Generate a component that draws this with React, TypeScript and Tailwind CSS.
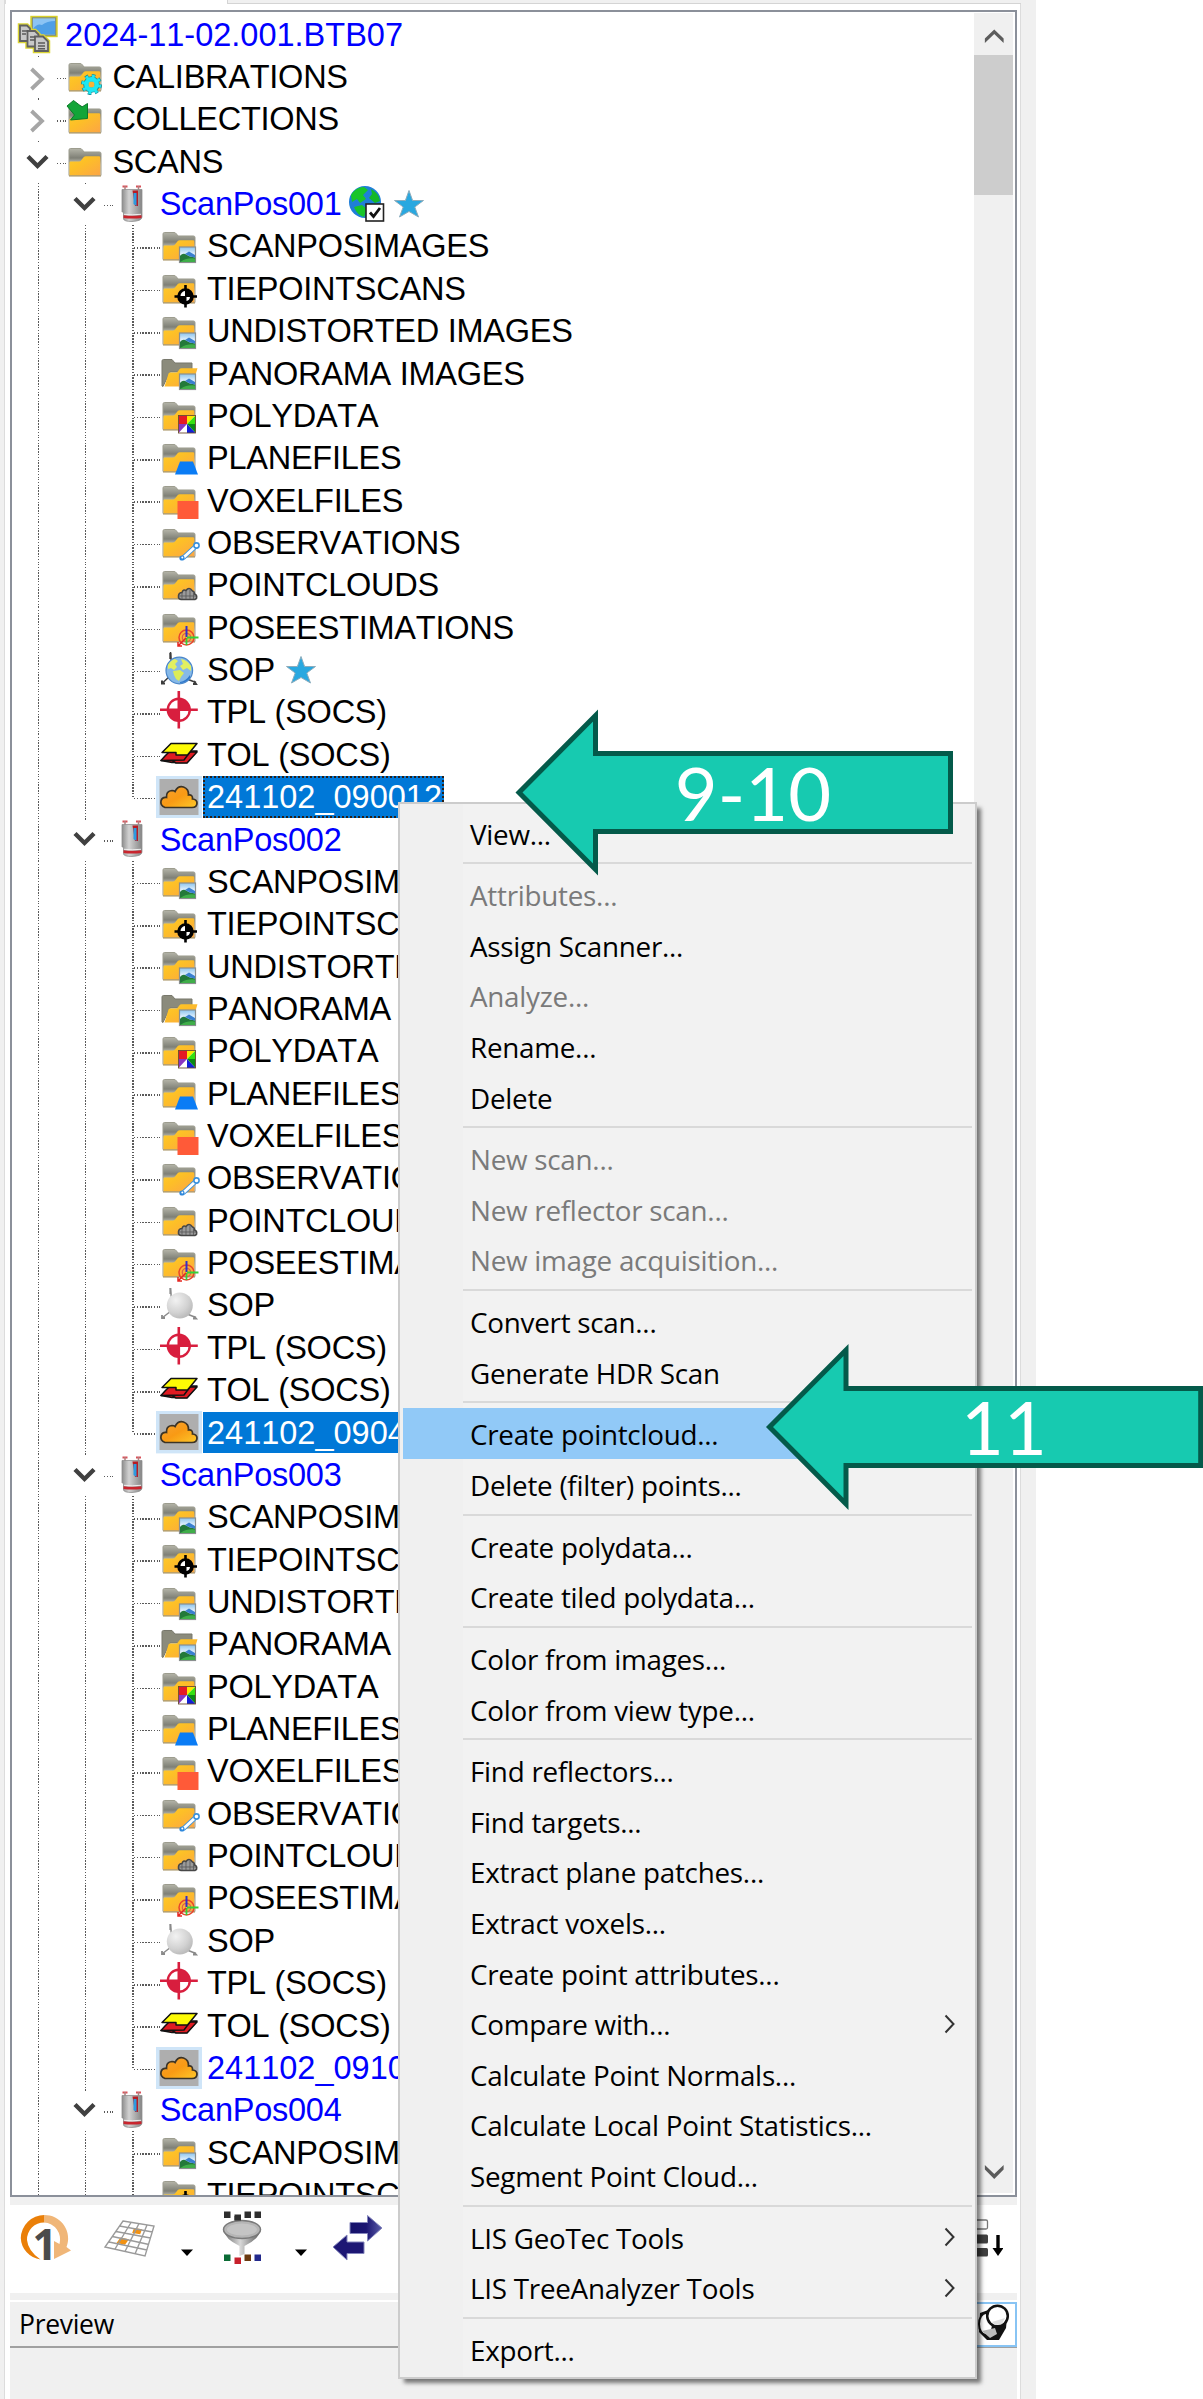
import type { ReactNode } from "react";

type IconName =
  | "images" | "tie" | "undist" | "pano" | "poly" | "plane" | "voxel" | "obs"
  | "pcloud" | "pose" | "globe" | "sphere" | "tpl" | "tol" | "cloud"
  | "project" | "calib" | "collect" | "folder" | "scanner";

function Defs() {
  return (
    <svg className="absolute h-0 w-0" aria-hidden="true">
      <defs>
        <linearGradient id="gFront" x1="0" y1="0" x2="1" y2="1">
          <stop offset="0" stopColor="#ffcb28" />
          <stop offset="0.4" stopColor="#fdbf27" />
          <stop offset="1" stopColor="#fca545" />
        </linearGradient>
        <linearGradient id="gBack" x1="0" y1="0" x2="0" y2="1">
          <stop offset="0" stopColor="#b4b4a8" />
          <stop offset="0.35" stopColor="#7f8076" />
          <stop offset="0.6" stopColor="#d4d4ca" />
        </linearGradient>
        <linearGradient id="gCloud" x1="0" y1="0" x2="1" y2="1">
          <stop offset="0" stopColor="#f7a233" />
          <stop offset="0.5" stopColor="#f99a14" />
          <stop offset="1" stopColor="#fdc92a" />
        </linearGradient>
        <linearGradient id="gSky" x1="0" y1="0" x2="0" y2="1">
          <stop offset="0" stopColor="#8cc4ee" />
          <stop offset="0.5" stopColor="#eef7ff" />
          <stop offset="1" stopColor="#3d8fd0" />
        </linearGradient>
        <linearGradient id="gScan" x1="0" y1="0" x2="1" y2="0">
          <stop offset="0" stopColor="#8d8d8d" />
          <stop offset="0.35" stopColor="#d2d2d2" />
          <stop offset="1" stopColor="#858585" />
        </linearGradient>
        <radialGradient id="gSphere" cx="0.35" cy="0.3" r="0.8">
          <stop offset="0" stopColor="#f2f2f2" />
          <stop offset="0.6" stopColor="#d2d2d2" />
          <stop offset="1" stopColor="#b4b4b4" />
        </radialGradient>
        <linearGradient id="gFunnel" x1="0" y1="0" x2="1" y2="0">
          <stop offset="0" stopColor="#6a6a6a" />
          <stop offset="0.45" stopColor="#d8d8d8" />
          <stop offset="1" stopColor="#5c5c5c" />
        </linearGradient>
        <linearGradient id="gArrowBlue" x1="0" y1="0" x2="1" y2="0">
          <stop offset="0" stopColor="#15126a" />
          <stop offset="0.5" stopColor="#1b1572" />
          <stop offset="1" stopColor="#5a5ca8" />
        </linearGradient>
      </defs>
    </svg>
  );
}

function Folder() {
  return (
    <g>
      <path d="M7 34.500V9q0-1.500 1.500-1.500H18q1.500 0 2.500 1.500l1.500 2H37.500q1.500 0 1.500 1.500V34.500Z" fill="url(#gBack)" stroke="#9c9c8e" strokeWidth="1" />
      <path d="M7.500 34.500V21.500q0-1 1.200-1H17q1.200 0 2-1l2.800-3.500q.7-.8 2-.8H37q1.300 0 1.300 1.300V34.500Z" fill="url(#gFront)" />
      <path d="M7 35H39" stroke="#b09c70" strokeWidth="1.200" />
    </g>
  );
}

function Photo() {
  return (
    <g>
      <rect x="23.500" y="22" width="16" height="15.500" fill="url(#gSky)" stroke="#8a8f8f" strokeWidth="1.200" />
      <path d="M24 31q3-4 7-1l3 1.500 5.200 1V37H24Z" fill="#23793a" />
      <path d="M29 29l4-2.500 6 3.500v2.500l-5-1Z" fill="#3a7fd0" />
      <path d="M25 36.500q6-4 14-3V37H24Z" fill="#3fae49" />
    </g>
  );
}

const GLYPHS: Record<IconName, ReactNode> = {
  folder: <Folder />,
  images: <g><Folder /><Photo /></g>,
  undist: <g><Folder /><g transform="translate(0 1)"><Photo /></g></g>,
  pano: (
    <g>
      <path d="M6 34V9q0-1.500 1.500-1.500H16l3 3.500H36V20H14L7 34.500Z" fill="#8b8b7c" stroke="#77776b" />
      <path d="M8.500 34.500L12.500 21.500q.5-1 1.500-1H20q1.200 0 2-1.200l1.500-2q.6-1 2-1H41.500L36 34.500Z" fill="url(#gFront)" />
      <Photo />
    </g>
  ),
  tie: (
    <g>
      <Folder />
      <path d="M29.500 17V39.500M18.500 28.500H41" stroke="#000" strokeWidth="2.600" />
      <circle cx="29.500" cy="28.500" r="8.300" fill="#000" />
      <path d="M29 28V23A5.500 5.500 0 0 0 24.500 28ZM30.500 29V33A4.500 4.500 0 0 0 34 29Z" fill="#fff" />
    </g>
  ),
  poly: (
    <g>
      <Folder />
      <rect x="22.500" y="20.500" width="17" height="17.500" fill="#fff" />
      <path d="M22.500 20.500H31V29H22.500Z" fill="#e51a24" />
      <path d="M31 29V20.500H39.500Z" fill="#ffe600" />
      <path d="M31 29L39.500 20.500V29Z" fill="#35e010" />
      <path d="M31 29H39.500V38Z" fill="#0b8a14" />
      <path d="M31 29L39.500 38H31Z" fill="#1420d8" />
      <path d="M31 29L22.500 38V29Z" fill="#8a35c0" />
      <rect x="22.500" y="20.500" width="17" height="17.500" fill="none" stroke="#6a4a30" strokeWidth="0.900" />
    </g>
  ),
  plane: <g><Folder /><path d="M24 24.500H37L42 37.500H19Z" fill="#0a7cf5" /></g>,
  voxel: <g><Folder /><rect x="21.500" y="22" width="21" height="18" fill="#ff5a38" /></g>,
  obs: (
    <g>
      <Folder />
      <path d="M27 36L40 24" stroke="#3b92dd" strokeWidth="4.600" />
      <path d="M27 36L40 24" stroke="#fff" strokeWidth="3" />
      <circle cx="40.500" cy="23.500" r="2.600" fill="#fff" stroke="#3b92dd" strokeWidth="1.600" />
      <circle cx="26" cy="36" r="2.600" fill="#2f88dc" />
      <circle cx="26.300" cy="35.400" r="1" fill="#fff" />
    </g>
  ),
  pcloud: (
    <g>
      <Folder />
      <path d="M25 35.500Q22 35 22.500 31.500Q23 28.500 26 28.500Q27 25 30 26.500Q33 22.500 36.500 27Q38.500 27.500 38.500 30Q41.500 31 40.500 34.500L39 35.500Z" fill="#9a9a9a" stroke="#474747" strokeWidth="1.500" />
      <path d="M26 29V35M30 27V35M34 26V35M37.500 29V35M23 32H40" stroke="#5c5c5c" strokeWidth="0.900" />
    </g>
  ),
  pose: (
    <g>
      <Folder />
      <circle cx="30.500" cy="30.500" r="7.500" fill="none" stroke="#e8452c" strokeWidth="1.500" />
      <circle cx="30.500" cy="30.500" r="4.200" fill="none" stroke="#d9604a" strokeWidth="1.200" />
      <path d="M30.500 19V30" stroke="#3030c8" strokeWidth="2" />
      <path d="M31 30.500H42.500M30.500 31V38" stroke="#35d038" strokeWidth="1.800" />
      <path d="M30 31L22 39M22 35V39H26" stroke="#e52520" strokeWidth="1.500" fill="none" />
    </g>
  ),
  globe: (
    <g>
      <path d="M14.500 3L15.500 16M6 34.500L15 26M31 30L40 33.500" stroke="#3c3c3c" strokeWidth="1.500" fill="none" />
      <path d="M14.300 4v6M6 31.500v3h3M37 35h3l-2-3" stroke="#3c3c3c" strokeWidth="2" fill="none" />
      <circle cx="23.300" cy="21.500" r="13.300" fill="#86b9e8" stroke="#4a86c8" strokeWidth="1.200" />
      <path d="M12 16Q15 11 19 10L22 12L19 15L21 18L18 21L15 19L12 20Z" fill="#e2f060" />
      <path d="M25 10Q31 11 35 17L35 22L31 19L27 21L24 17L27 15Z" fill="#e2f060" />
      <path d="M17 22L24 21L28 24L25 28L23 32L20 30L18 26Z" fill="#dcec58" />
      <path d="M24 33Q30 32 34 26L34 29Q30 34 24 34Z" fill="#2f78cc" />
    </g>
  ),
  sphere: (
    <g>
      <path d="M14.500 4L15.500 16M6 34L15 27M31 30L40 33.500" stroke="#8a8a8a" strokeWidth="1.500" fill="none" />
      <path d="M14.300 4v6M6 31v3h3M37 34.500h3l-2-2" stroke="#8a8a8a" strokeWidth="1.800" fill="none" />
      <circle cx="23.800" cy="21.500" r="13" fill="url(#gSphere)" />
    </g>
  ),
  tpl: (
    <g>
      <circle cx="22.800" cy="18.800" r="11" fill="#fff" stroke="#d81e3e" strokeWidth="2.400" />
      <path d="M22.800 18.800V8A11 11 0 0 1 34 18.800ZM22.800 18.800V30A11 11 0 0 1 12 18.800Z" fill="#d81e3e" />
      <path d="M22.800 0V37.500M4 18.800H41.800" stroke="#d81e3e" strokeWidth="2.600" />
    </g>
  ),
  tol: (
    <g stroke="#111" strokeWidth="1.500" strokeLinejoin="round">
      <path d="M5 26.500L9 22L14 17H41L31 28.500H16Z" fill="#e01b22" />
      <path d="M5 26.500H16L20 29H31L41 18H34L28 26Z" fill="#e01b22" />
      <path d="M15 9.500H41L31.500 21H20V18.500H6Z" fill="#fdfb05" />
    </g>
  ),
  cloud: (
    <g>
      <rect x="0" y="0" width="46" height="42.400" fill="#cfe5f8" />
      <rect x="3.500" y="3" width="39" height="36" fill="#aeaeae" />
      <path d="M9 31.500Q4 29.500 5 25Q6 21 10.500 21.500Q10 15 16 14.500Q18 14.500 19 15.500Q22 9.500 27.500 11Q33 13 32.500 19Q37 18.500 36.500 23Q41 23.500 41 27Q41 31.500 36 31.500Z" fill="url(#gCloud)" stroke="#3c3426" strokeWidth="1.700" />
    </g>
  ),
  project: (
    <g>
      <rect x="16.500" y="3" width="25" height="19" fill="#8cc4f4" stroke="#d8d02a" strokeWidth="2.400" />
      <path d="M18 15Q22 9 27 11Q32 7 40 7V20.500H18Z" fill="#4f9fe6" />
      <rect x="17.300" y="3.800" width="23.400" height="17.400" fill="none" stroke="#6f7f90" strokeWidth="0.900" />
      <g fill="#b9b9b9" stroke="#dbd536" strokeWidth="4.500">
        <path d="M5 11.500H12L15 14.500V27H5Z" />
        <path d="M12.500 17H20L23.500 20.500V32.500H12.500Z" />
        <path d="M20 22.500H28L33 27.500V37H20Z" />
      </g>
      <g fill="#c8c8c8" stroke="#616161" strokeWidth="1.800">
        <path d="M5 11.500H12L15 14.500V27H5Z" />
        <path d="M12.500 17H20L23.500 20.500V32.500H12.500Z" />
        <path d="M20 22.500H28L33 27.500V37H20Z" />
      </g>
      <path d="M7 17h6M7 20h4M15 23h5M15 26h5M23 29h7M23 32h7M23 34.700h7" stroke="#5a5a5a" strokeWidth="1.500" />
    </g>
  ),
  calib: (
    <g>
      <Folder />
      <circle cx="29.500" cy="28.500" r="8.300" fill="none" stroke="#1b8e98" strokeWidth="4.500" strokeDasharray="3.300 3.220" />
      <circle cx="29.500" cy="28.500" r="5.800" fill="none" stroke="#1b8e98" strokeWidth="5" />
      <circle cx="29.500" cy="28.500" r="8" fill="none" stroke="#1fe8f2" strokeWidth="3.500" strokeDasharray="2.600 3.680" strokeDashoffset="-.3" />
      <circle cx="29.500" cy="28.500" r="5.200" fill="none" stroke="#1fe8f2" strokeWidth="4.400" />
    </g>
  ),
  collect: (
    <g>
      <Folder />
      <path d="M5 8L11.500 2.500L20 9L25.500 5.500V20.500L8.500 22L12.500 17Z" fill="#12a538" stroke="#0b7a28" strokeWidth="1" />
    </g>
  ),
  scanner: (
    <g>
      <path d="M13.500 3.500h5M27 3.500h5" stroke="#d85058" strokeWidth="2" />
      <path d="M16 3v4M29.500 3v4" stroke="#b08080" strokeWidth="1.500" />
      <path d="M13 6.500H33V34Q33 38 23 38.500Q15 38.500 14.500 36L14.500 29H13Z" fill="url(#gScan)" stroke="#909090" strokeWidth="0.800" />
      <path d="M23.500 7.500H29V23H26Z" fill="#b81c24" />
      <path d="M24.500 10H27.500V23L24.500 21Z" fill="#2c9be0" />
      <path d="M14.500 32.300Q23 33.300 32.500 32.300V35Q23 36 14.500 35Z" fill="#c9252e" />
      <path d="M15 31.300Q23 32.300 32 31.300" stroke="#eee" strokeWidth="1" fill="none" />
    </g>
  ),
};

function Icon({ name }: { name: IconName }) {
  return (
    <svg className="relative h-[42.37px] w-[47px] shrink-0" viewBox="0 0 47 42.37">
      {GLYPHS[name]}
    </svg>
  );
}

const V_DOTS = "bg-[repeating-linear-gradient(180deg,#5a5a5a_0px,#5a5a5a_1.4px,#fff_1.4px,#fff_2.83px)]";
const H_DOTS = "bg-[repeating-linear-gradient(90deg,#5a5a5a_0px,#5a5a5a_1.4px,#fff_1.4px,#fff_2.83px)]";

type GuideKind = "line" | "tee" | "end" | "open" | "closed";

function Guide({ kind }: { kind: GuideKind }) {
  const chevron = kind === "open" || kind === "closed";
  return (
    <span className="relative h-full w-[47.3px] shrink-0">
      {(kind === "line" || kind === "tee") && <span className={`absolute inset-y-0 left-[23px] w-[1.500px] ${V_DOTS}`} />}
      {kind === "end" && <span className={`absolute top-0 left-[23px] h-[23px] w-[1.500px] ${V_DOTS}`} />}
      {(kind === "tee" || kind === "end") && <span className={`absolute top-[22px] left-[25px] h-[1.500px] w-[26px] ${H_DOTS}`} />}
      {chevron && <span className="absolute top-0 left-[23px] h-[1.500px] w-[1.500px] bg-[#555]" />}
      {chevron && <span className={`absolute top-[22px] left-[42px] h-[1.500px] w-[9px] ${H_DOTS}`} />}
      {kind === "open" && (
        <svg className="absolute top-[13px] left-[11px] h-[16px] w-[24px]" viewBox="0 0 24 16">
          <path d="M2 2.500L11.500 12L21 2.500" fill="none" stroke="#404040" strokeWidth="4.400" />
        </svg>
      )}
      {kind === "closed" && (
        <svg className="absolute top-[11px] left-[14px] h-[24px] w-[17px]" viewBox="0 0 17 24">
          <path d="M2.500 2L13 12L2.500 22" fill="none" stroke="#a6a6a6" strokeWidth="3.800" />
        </svg>
      )}
    </span>
  );
}

function Star() {
  return (
    <svg className="h-[30px] w-[32px]" viewBox="0 0 32 30">
      <path d="M16 1.500L19.600 11.500H30.500L21.800 18L25.500 28L16 22.500L6.500 28L10.200 18L1.500 11.500H12.400Z" fill="#29a8e0" stroke="#8cacbc" strokeWidth="1" />
    </svg>
  );
}

function CheckedGlobe() {
  return (
    <svg className="h-[38px] w-[37px]" viewBox="0 0 37 38">
      <circle cx="17" cy="17" r="16" fill="#1f7fd8" />
      <path d="M3 10Q8 2 16 2L20 5L15 10L18 14L12 18L9 14L4 17Z" fill="#18c52a" />
      <path d="M23 4Q31 8 32 16L27 18L21 13L24 9Z" fill="#14b828" />
      <path d="M6 22L14 20L19 24L16 32Q9 30 6 22Z" fill="#18c52a" />
      <rect x="18" y="19" width="17.500" height="17" fill="#fff" stroke="#222" strokeWidth="1.600" />
      <path d="M22 27.500L25.500 31.500L32 23" fill="none" stroke="#111" strokeWidth="2.800" />
    </svg>
  );
}

type Row = {
  guides: GuideKind[];
  icon: IconName;
  label: string;
  blue?: boolean;
  selected?: "focus" | "plain";
  extra?: ReactNode;
};

function TreeRow({ guides, icon, label, blue, selected, extra }: Row) {
  const tone = selected ? "bg-[#0078d7] text-white" : blue ? "text-[#0000ff]" : "text-black";
  const outline = selected === "focus" ? "outline-2 -outline-offset-2 outline-dotted outline-[#2b2018]" : "";
  const tracking = /^\d/.test(label) ? "tracking-[0px]" : "tracking-[-0.250px]";
  return (
    <div className="flex h-[42.37px] shrink-0 items-center whitespace-nowrap">
      {guides.map((g, i) => <Guide key={i} kind={g} />)}
      <Icon name={icon} />
      <span className={`flex h-[41.500px] items-center pr-[2px] pl-[3.500px] text-[32.500px] leading-[40px] [font-kerning:none] ${tracking} ${tone} ${outline}`}>
        {label}
      </span>
      {extra}
    </div>
  );
}

const CHILDREN: [IconName, string][] = [
  ["images", "SCANPOSIMAGES"],
  ["tie", "TIEPOINTSCANS"],
  ["undist", "UNDISTORTED IMAGES"],
  ["pano", "PANORAMA IMAGES"],
  ["poly", "POLYDATA"],
  ["plane", "PLANEFILES"],
  ["voxel", "VOXELFILES"],
  ["obs", "OBSERVATIONS"],
  ["pcloud", "POINTCLOUDS"],
  ["pose", "POSEESTIMATIONS"],
  ["sphere", "SOP"],
  ["tpl", "TPL (SOCS)"],
  ["tol", "TOL (SOCS)"],
];

function scanRows(id: string, scan: string | null, selected?: "focus" | "plain", count = 13): Row[] {
  const first = id === "ScanPos001";
  const rows: Row[] = [
    {
      guides: ["line", "open"],
      icon: "scanner",
      label: id,
      blue: true,
      extra: first ? <span className="ml-[4px] flex items-center gap-[8px]"><CheckedGlobe /><Star /></span> : null,
    },
  ];
  CHILDREN.slice(0, count).forEach(([icon, label]) => {
    const located = first && label === "SOP";
    rows.push({
      guides: ["line", "line", "tee"],
      icon: located ? "globe" : icon,
      label,
      extra: located ? <span className="ml-[8px]"><Star /></span> : null,
    });
  });
  if (scan) rows.push({ guides: ["line", "line", "end"], icon: "cloud", label: scan, blue: true, selected });
  return rows;
}

const ROWS: Row[] = [
  { guides: [], icon: "project", label: "2024-11-02.001.BTB07", blue: true },
  { guides: ["closed"], icon: "calib", label: "CALIBRATIONS" },
  { guides: ["closed"], icon: "collect", label: "COLLECTIONS" },
  { guides: ["open"], icon: "folder", label: "SCANS" },
  ...scanRows("ScanPos001", "241102_090012", "focus"),
  ...scanRows("ScanPos002", "241102_090412", "plain"),
  ...scanRows("ScanPos003", "241102_091012"),
  ...scanRows("ScanPos004", null, undefined, 2),
];

function ScrollBar() {
  return (
    <div className="mt-[1px] mr-[2px] mb-[2px] flex w-[39.500px] shrink-0 flex-col items-center bg-[#f0f0f0]">
      <svg className="h-[42px] w-full" viewBox="0 0 40 42">
        <path d="M11 25.500L20.500 16.500L30 25.500V30L20.500 21L11 30Z" fill="#5c5c5c" />
      </svg>
      <div className="h-[140px] w-full bg-[#cdcdcd]" />
      <div className="flex-1" />
      <svg className="h-[42px] w-full" viewBox="0 0 40 42">
        <path d="M11 14V18.500L20.500 28L30 18.500V14L20.500 23Z" fill="#5c5c5c" />
      </svg>
    </div>
  );
}

function DropArrow() {
  return (
    <svg className="h-[7px] w-[12px]" viewBox="0 0 12 7"><path d="M0 .5H12L6 7Z" fill="#000" /></svg>
  );
}

function Toolbar() {
  return (
    <div className="mt-[8px] flex h-[88px] shrink-0 items-start bg-white">
      <svg className="mt-[8px] ml-[10px] h-[50px] w-[54px] overflow-visible" viewBox="0 0 54 50">
        <path d="M20.500 46.500A22.500 22.500 0 0 1 .8 25A23.500 23.500 0 0 1 24.300 2V9.500A17 17 0 0 0 7 27Q8 38 20.500 46.500Z" fill="#ea7f08" />
        <path d="M24 2A23.500 23.500 0 0 1 46.500 34L51 37.500L34 46V28L39.500 31A17 17 0 0 0 24 9.500Z" fill="#f0b678" />
        <text x="12.500" y="46.500" fontFamily="Open Sans" fontWeight="700" fontSize="43" fill="#4b4b4b">1</text>
      </svg>
      <svg className="mt-[14px] ml-[29px] h-[40px] w-[53px]" viewBox="0 0 53 40">
        <path d="M20 2L51 7L42 37L2 28Z" fill="#fff" />
        <path d="M31 9l8 1.300-1.800 5-8-1.300ZM17.500 18.500l8.500 1.700-4 5.500-8.500-1.800Z" fill="#f39211" />
        <path d="M20 2L51 7L42 37L2 28ZM28 3.500L12 30M36 4.500L22 32.500M44 6L32 35M16.500 7L49.500 13M13 12.500L47.500 19M9.500 17.500L46 25.500M6 23L44 31" fill="none" stroke="#9a9a9a" strokeWidth="1.400" />
      </svg>
      <span className="mt-[44px] ml-[25px] flex"><DropArrow /></span>
      <svg className="mt-[5px] ml-[28.500px] h-[55px] w-[42px]" viewBox="0 0 42 55">
        <g fill="#2e2e2e"><rect x="2" y="1.500" width="6.500" height="6.500" /><rect x="12.500" y="4.500" width="6.500" height="6" /><rect x="22.500" y="1.500" width="6.500" height="6.500" /><rect x="32.500" y="1.500" width="6.500" height="6.500" /></g>
        <path d="M1.500 20Q3 29 17.500 36V46L22.500 44V36Q37 29 38.500 20Z" fill="url(#gFunnel)" />
        <ellipse cx="20" cy="19.500" rx="18.500" ry="9" fill="#b5b5b5" stroke="#7a7a7a" strokeWidth="1.500" />
        <ellipse cx="20" cy="19.500" rx="15" ry="6" fill="#c4c4c4" />
        <rect x="12.500" y="6" width="6.500" height="4.500" fill="#2e2e2e" />
        <rect x="2" y="44.500" width="6.500" height="6.500" fill="#0b6b35" /><rect x="12.500" y="47.500" width="6.500" height="6.500" fill="#c8202c" />
        <rect x="22.500" y="44.500" width="6.500" height="6.500" fill="#6b3a10" /><rect x="32.500" y="44.500" width="6.500" height="6.500" fill="#23298c" />
      </svg>
      <span className="mt-[44px] ml-[31px] flex"><DropArrow /></span>
      <svg className="mt-[9px] ml-[25px] h-[47px] w-[51px]" viewBox="0 0 51 47">
        <path d="M18 8.500H35.500V1.500L50 14L35.500 27V19.500H18Z" fill="url(#gArrowBlue)" stroke="#8486bc" strokeWidth="1" />
        <path d="M32 28V39.500H15V46L1 33L15 21V28Z" fill="#1d1774" stroke="#8486bc" strokeWidth="1" />
      </svg>
      <svg className="mt-[14px] mr-[14px] ml-auto h-[38px] w-[40px]" viewBox="0 0 40 38">
        <rect x="0" y="1" width="24.500" height="9" rx="1.500" fill="#fff" stroke="#777" strokeWidth="1.300" />
        <rect x="0" y="15.500" width="25" height="9" rx="1.500" fill="#404040" /><rect x="0" y="29" width="25" height="8.500" rx="1.500" fill="#404040" />
        <path d="M35 16V31" stroke="#000" strokeWidth="3.400" /><path d="M29.500 29H40.500L35 37Z" fill="#000" />
      </svg>
    </div>
  );
}

function PreviewBar() {
  return (
    <div className="mt-[7px] flex h-[48px] shrink-0 items-start justify-between border-t-2 border-b-2 border-t-white border-b-[#a0a0a0] bg-[#f0f0f0] pl-[9px]">
      <span className="font-['Open_Sans'] text-[26.500px] leading-[44px] tracking-[-0.300px] text-black">Preview</span>
      <div className="flex h-[45px] w-[58px] justify-end border-2 border-[#88c4f4] bg-white pr-[4px]">
        <svg className="h-[40px] w-[36px]" viewBox="0 0 36 40">
          <path d="M5 9L16 5L32 14L31 24L24 36H12L4 28Z" fill="#111" />
          <ellipse cx="11" cy="20" rx="7" ry="11" fill="#fff" stroke="#111" strokeWidth="2" />
          <path d="M7 27L20 24L22 30L15 34Z" fill="#bbb" />
          <circle cx="22.500" cy="12" r="10.300" fill="#fff" stroke="#111" strokeWidth="2.500" />
          <path d="M17 18L30 14L27 20L20 21Z" fill="#ddd" />
        </svg>
      </div>
    </div>
  );
}

type Item = { label: string; off?: boolean; sub?: boolean; hot?: boolean };

const MENU: Item[][] = [
  [{ label: "View..." }],
  [
    { label: "Attributes...", off: true },
    { label: "Assign Scanner..." },
    { label: "Analyze...", off: true },
    { label: "Rename..." },
    { label: "Delete" },
  ],
  [
    { label: "New scan...", off: true },
    { label: "New reflector scan...", off: true },
    { label: "New image acquisition...", off: true },
  ],
  [{ label: "Convert scan..." }, { label: "Generate HDR Scan" }],
  [{ label: "Create pointcloud...", hot: true }, { label: "Delete (filter) points..." }],
  [{ label: "Create polydata..." }, { label: "Create tiled polydata..." }],
  [{ label: "Color from images..." }, { label: "Color from view type..." }],
  [
    { label: "Find reflectors..." },
    { label: "Find targets..." },
    { label: "Extract plane patches..." },
    { label: "Extract voxels..." },
    { label: "Create point attributes..." },
    { label: "Compare with...", sub: true },
    { label: "Calculate Point Normals..." },
    { label: "Calculate Local Point Statistics..." },
    { label: "Segment Point Cloud..." },
  ],
  [{ label: "LIS GeoTec Tools", sub: true }, { label: "LIS TreeAnalyzer Tools", sub: true }],
  [{ label: "Export..." }],
];

function ContextMenu() {
  return (
    <div className="absolute top-[802px] left-[398px] flex h-[1577px] w-[579px] flex-col border-2 border-[#cccccc] bg-[linear-gradient(90deg,#f0f0f0_63px,#f2f2f2_63px)] px-[3px] pt-[3px] font-['Open_Sans'] shadow-[5px_5px_4px_-1px_rgba(0,0,0,0.5)]">
      {MENU.map((group, gi) => (
        <div key={gi}>
          {gi > 0 && (
            <div className="flex h-[11.100px] items-center pl-[60px]">
              <div className="h-[2px] flex-1 bg-[#d9d9d9]" />
            </div>
          )}
          {group.map((item) => (
            <div
              key={item.label}
              className={`flex h-[50.600px] items-center justify-between pr-[16px] pl-[67px] text-[27.800px] tracking-[-0.250px] whitespace-nowrap ${item.hot ? "bg-[#91c9f7]" : ""} ${item.off ? "text-[#7a7a7a]" : "text-black"}`}
            >
              <span className="pt-[2.500px] leading-[40px]">{item.label}</span>
              {item.sub && (
                <svg className="mt-[2px] h-[20px] w-[12px]" viewBox="0 0 12 20">
                  <path d="M1.500 1.500L9.500 10L1.500 18.500" fill="none" stroke="#333" strokeWidth="2" />
                </svg>
              )}
            </div>
          ))}
        </div>
      ))}
    </div>
  );
}

function Callouts() {
  return (
    <>
      <svg className="absolute top-[700px] left-[510px] h-[185px] w-[450px]" viewBox="510 700 450 185">
        <path d="M519 792.500L595.500 715.500V753.500H950.500V831.500H595.500V869.500Z" fill="#17cab0" stroke="#045a4a" strokeWidth="5" strokeMiterlimit="10" />
      </svg>
      <span className="absolute top-[749px] left-[600px] w-[306px] text-center font-['Lato'] text-[74px] leading-[88px] text-white">9-10</span>
      <svg className="absolute top-[1335px] left-[758px] h-[185px] w-[445px]" viewBox="758 1335 445 185">
        <path d="M769.500 1427L846 1350V1388.500H1200.700V1465.500H846V1504Z" fill="#17cab0" stroke="#045a4a" strokeWidth="5" strokeMiterlimit="10" />
      </svg>
      <span className="absolute top-[1383px] left-[851px] w-[306px] text-center font-['Lato'] text-[74px] leading-[88px] text-white">11</span>
    </>
  );
}

export default function App() {
  return (
    <div className="relative h-[2399px] w-[1203px] overflow-hidden bg-white font-['Liberation_Sans',Arial,sans-serif]">
      <Defs />
      <div className="flex h-full w-[1036px] flex-col bg-[#f0f0f0] pr-[15px] pl-[4px]">
        <div className="flex h-[4px] shrink-0">
          <div className="w-[223px] border-l-2 border-[#dcdcdc] bg-white" />
          <div className="flex-1 border-b border-l border-[#d4d4d4]" />
        </div>
        <div className="flex min-h-0 flex-1 flex-col border-r border-l border-[#dcdcdc] bg-white pt-[6px] pr-[3px] pl-[5px]">
          <div className="flex h-[2187px] shrink-0 border-2 border-[#8b909a] bg-white">
            <div className="flex min-w-0 flex-1 flex-col overflow-hidden pt-[1.500px] pl-[2.600px]">
              {ROWS.map((row, i) => <TreeRow key={i} {...row} />)}
            </div>
            <ScrollBar />
          </div>
          <div className="flex flex-1 flex-col bg-[#f0f0f0]">
            <Toolbar />
            <PreviewBar />
          </div>
        </div>
      </div>
      <ContextMenu />
      <Callouts />
    </div>
  );
}
